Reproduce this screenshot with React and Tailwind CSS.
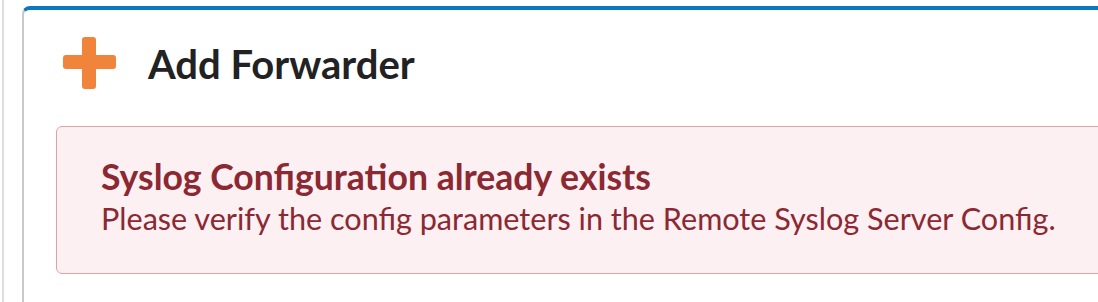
export default function App() {
  return (
    <div
      className="h-[302px] w-[1098px] overflow-hidden bg-white pl-[2px]"
      style={{ fontFamily: "Lato, 'Noto Sans', sans-serif" }}
    >
      <div className="h-full border-l-2 border-[#dedede] pl-[18px] pt-[6px]">
        <div className="h-[320px] w-[1120px] rounded-tl-[8px] border-l-2 border-t-4 border-[#c9c9c9] border-t-[#0a77c0] bg-white pl-[32px] pt-[27px]">
          <div className="flex items-center pl-[7px]">
            <svg width="53" height="53" viewBox="0 0 53 53" className="shrink-0">
              <rect x="19" y="0" width="14" height="52" rx="3" fill="#f0843a" />
              <rect x="0" y="18" width="53" height="14" rx="3" fill="#f0843a" />
            </svg>
            <h1 className="ml-[32px] text-[40px] font-bold leading-none text-[#222]">
              Add Forwarder
            </h1>
          </div>
          <div className="mt-[36px] h-[148px] rounded-[6px] border-[1.5px] border-[#d8a6aa] bg-[#fdf0f2] pl-[44px] pt-[29px] text-[#8b2832]">
            <div className="text-[35.6px] font-bold leading-[42px]">
              Syslog Configuration already exists
            </div>
            <div className="text-[30.6px] leading-[41px]">
              Please verify the config parameters in the Remote Syslog Server Config.
            </div>
          </div>
        </div>
      </div>
    </div>
  );
}
